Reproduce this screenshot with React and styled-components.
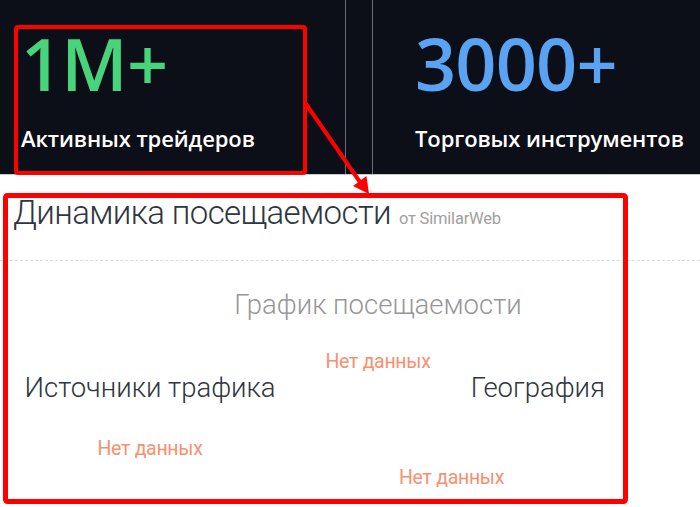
import React from 'react'
import styled, { createGlobalStyle } from 'styled-components'

const GlobalStyle = createGlobalStyle`
  html, body {
    margin: 0;
    padding: 0;
    background: #ffffff;
  }
  #root {
    width: 700px;
    height: 507px;
    overflow: hidden;
  }
`

const Page = styled.div`
  position: relative;
  width: 700px;
  height: 507px;
  overflow: hidden;
  background: #fff;
`

const StatsBand = styled.section`
  display: flex;
  height: 174px;
  background: #0c0e18;
  border-bottom: 1px solid #c7cad1;
  box-sizing: content-box;
`

const StatCard = styled.div`
  display: flex;
  flex-direction: column;
  width: ${({ $width }) => $width}px;
  padding-left: ${({ $pad }) => $pad}px;
  box-sizing: border-box;
  border-left: ${({ $lineLeft }) => ($lineLeft ? '1px solid #6a6e78' : 'none')};
  border-right: ${({ $lineRight }) => ($lineRight ? '1px solid #6a6e78' : 'none')};
  font-family: "Open Sans", "Noto Sans", sans-serif;
`

const Gap = styled.div`
  width: 26px;
`

const StatValue = styled.div`
  margin-top: 18px;
  font-size: 72px;
  line-height: 90px;
  font-weight: 600;
  color: ${({ $color }) => $color};
  letter-spacing: -0.8px;
`

const StatLabel = styled.div`
  margin-top: 17px;
  font-size: 22px;
  line-height: 26px;
  font-weight: 600;
  color: #ffffff;
  letter-spacing: -0.1px;
`

const Widget = styled.section`
  font-family: Roboto, "Liberation Sans", sans-serif;
  font-weight: 300;
`

const WidgetHeader = styled.div`
  display: flex;
  align-items: baseline;
  gap: 8px;
  padding: 18px 0 0 13px;
  height: 86px;
  box-sizing: border-box;
  border-bottom: 1px dashed #d3dfdf;
`

const WidgetTitle = styled.h2`
  margin: 0;
  font-size: 33px;
  line-height: 40px;
  font-weight: 300;
  color: #2f3640;
  letter-spacing: -0.6px;
`

const Source = styled.span`
  font-size: 16.5px;
  font-weight: 400;
  color: #a0a0a0;
  letter-spacing: -0.2px;
`

const Block = styled.div`
  display: flex;
  flex-direction: column;
  align-items: ${({ $align }) => $align || 'center'};
  width: ${({ $width }) => $width}px;
`

const BlockTitle = styled.div`
  font-size: 27.5px;
  line-height: 32px;
  font-weight: 300;
  color: ${({ $muted }) => ($muted ? '#979797' : '#2f3640')};
`

const NoData = styled.div`
  align-self: ${({ $self }) => $self || 'auto'};
  margin-top: ${({ $top }) => $top}px;
  font-size: 19.5px;
  line-height: 22px;
  font-weight: 400;
  color: #f9906f;
  letter-spacing: -0.3px;
`

const TrafficRow = styled.div`
  display: flex;
  padding: 28px 0 0 120px;
`

const SplitRow = styled.div`
  display: flex;
  justify-content: space-between;
  padding: 0 95px 0 0;
  margin-top: -1px;
`

const Annotations = styled.svg`
  position: absolute;
  top: 0;
  left: 0;
  pointer-events: none;
`

export default function App() {
  return (
    <>
      <GlobalStyle />
      <Page>
        <StatsBand>
          <StatCard $width={346} $pad={21} $lineRight>
            <StatValue $color="#47d47b">1M+</StatValue>
            <StatLabel>Активных трейдеров</StatLabel>
          </StatCard>
          <Gap />
          <StatCard $width={328} $pad={42} $lineLeft>
            <StatValue $color="#5aa3f3">3000+</StatValue>
            <StatLabel>Торговых инструментов</StatLabel>
          </StatCard>
        </StatsBand>

        <Widget>
          <WidgetHeader>
            <WidgetTitle>Динамика посещаемости</WidgetTitle>
            <Source>от SimilarWeb</Source>
          </WidgetHeader>

          <TrafficRow>
            <Block $width={516}>
              <BlockTitle $muted>График посещаемости</BlockTitle>
              <NoData $top={30}>Нет данных</NoData>
            </Block>
          </TrafficRow>

          <SplitRow>
            <Block $width={300}>
              <BlockTitle>Источники трафика</BlockTitle>
              <NoData $top={34}>Нет данных</NoData>
            </Block>
            <Block $width={206} $align="flex-end">
              <BlockTitle>География</BlockTitle>
              <NoData $top={63} $self="flex-start">Нет данных</NoData>
            </Block>
          </SplitRow>
        </Widget>

        <Annotations width="700" height="507" viewBox="0 0 700 507">
          <rect x="16" y="27" width="289" height="146" rx="2" fill="none" stroke="#ff0000" strokeWidth="4" />
          <rect x="5.5" y="195.5" width="620" height="306" rx="2" fill="none" stroke="#ff0000" strokeWidth="5" />
          <line x1="306" y1="104" x2="362" y2="185" stroke="#ff0000" strokeWidth="4" />
          <polygon points="369,194 353,186 366.5,176" fill="#ff0000" />
        </Annotations>
      </Page>
    </>
  )
}
